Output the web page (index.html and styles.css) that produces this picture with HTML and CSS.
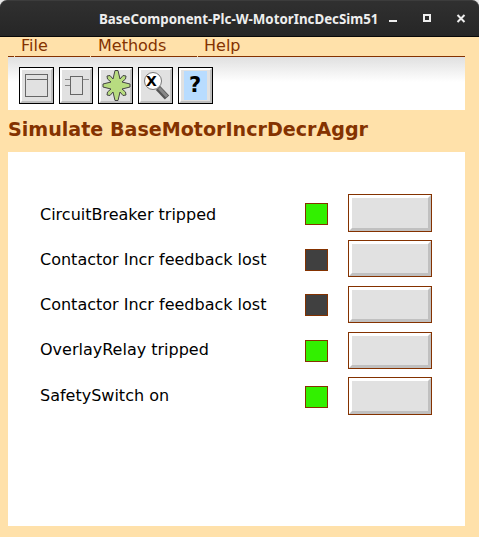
FILE: index.html
```html
<!DOCTYPE html>
<html lang="en">
<head>
<meta charset="utf-8">
<title>BaseComponent-Plc-W-MotorIncDecSim51</title>
<link rel="stylesheet" href="styles.css">
</head>
<body>
<header class="titlebar">
  <div class="title"><svg class="title-text" width="280" height="20"><text x="0" y="14" textLength="279.500" lengthAdjust="spacingAndGlyphs">BaseComponent-Plc-W-MotorIncDecSim51</text></svg></div>
  <svg class="controls" width="80" height="16" shape-rendering="crispEdges">
    <path d="M2 11h8v2H2z" fill="#eee"/>
    <path d="M37 6h6v6h-6z" fill="none" stroke="#eee" stroke-width="2"/>
    <path d="M70.500 6l7 7M77.500 6l-7 7" stroke="#eee" stroke-width="2" shape-rendering="auto"/>
  </svg>
</header>
<nav class="menu">
  <span class="item lead"></span><span class="item file">File</span><span class="item methods">Methods</span><span class="item help">Help</span>
</nav>
<div class="toolbar">
  <button class="tool"><svg width="27" height="29" shape-rendering="crispEdges"><path d="M2.5 3.500h22v22h-22zM4 8.500h20" fill="none" stroke="#666"/></svg></button>
  <button class="tool narrow"><svg width="26" height="29" shape-rendering="crispEdges"><path d="M7.500 5.500h12v18h-12z" fill="none" stroke="#666"/><path d="M2 8.500h5M2 14.500h5M20 8.500h6" stroke="#888"/></svg></button>
  <button class="tool"><svg width="27" height="29"><path d="M13 -.5h3L18 8l3-3.500 3 .5-.5 3L20 11l8 2v3l-8 2 3.500 3 .5 3-3 .5L18 21l-2 8.500h-3L11 21l-3 3.500-3-.5.500-3L9 18l-8-2v-3l8-2L5.500 8 5 5l3-.5L11 8z" fill="#b8dc80" stroke="#444"/></svg></button>
  <button class="tool"><svg width="27" height="29"><path d="M16 17l9 9.500" stroke="#555" stroke-width="6"/><path d="M17 17l8 8.500" stroke="#888" stroke-width="3"/><circle cx="11" cy="10" r="8.500" fill="#fff" stroke="#777"/><text class="glyph" x="4" y="15">X</text></svg></button>
  <button class="tool"><svg width="27" height="29"><path d="M2 0h23v29H2z" fill="#b8dcff"/><text class="question" x="7" y="21">?</text></svg></button>
</div>
<h1>Simulate BaseMotorIncrDecrAggr</h1>
<main>
  <div class="row r1"><span class="label">CircuitBreaker tripped</span><i class="led on"></i><button class="push"></button></div>
  <div class="row r2"><span class="label">Contactor Incr feedback lost</span><i class="led"></i><button class="push"></button></div>
  <div class="row r3"><span class="label">Contactor Incr feedback lost</span><i class="led"></i><button class="push"></button></div>
  <div class="row r4"><span class="label">OverlayRelay tripped</span><i class="led on"></i><button class="push"></button></div>
  <div class="row r5"><span class="label">SafetySwitch on</span><i class="led on"></i><button class="push"></button></div>
</main>
</body>
</html>
```
FILE: styles.css
```css
*, *::before { box-sizing: border-box; }
html { background: #ffe1aa; }
body { margin: 0; width: 479px; height: 537px; overflow: hidden; background: linear-gradient(#e8e8e8 8px, #ffe1aa 8px); font-family: "DejaVu Sans", sans-serif; }
svg { display: block; overflow: visible; }
.titlebar { display: flex; height: 37px; padding: 9px 0 0 99px; background: linear-gradient(#303030, #262626); border-top: 1px solid #3c3c3c; border-bottom: 1px solid #080808; border-radius: 7px 7px 0 0; }
.title { width: 288px; }
.title-text text { font: bold 13.3px "Noto Sans", sans-serif; fill: #eee; }
.controls { margin-top: -1px; }
.menu { display: flex; gap: 1px; height: 20px; margin: 0 14px 0 8px; }
.item { height: 20px; border-bottom: 1px solid #843200; color: #843200; font-size: 16px; line-height: 18px; padding-left: 6px; }
.lead { width: 6px; }
.file { width: 75px; }
.methods { width: 106px; padding-left: 7px; }
.help { flex: 1; }
.toolbar { display: flex; gap: 5px; height: 53px; margin: 0 14px 0 8px; padding: 10px 11px 6px; background: linear-gradient(#e0e0e0, #fff 25px); }
.tool { width: 35px; height: 37px; padding: 0; border: 1px solid #000; background: #e1e1e1; }
.tool svg { width: 33px; height: 35px; padding: 1px; border: 2px solid; border-color: #fff #bebebe #bebebe #fff; }
.narrow { width: 34px; }
.narrow svg { width: 32px; }
.glyph { font: bold 14px "DejaVu Sans", sans-serif; }
.question { font: bold 21px "DejaVu Sans", sans-serif; }
h1 { margin: 0 0 0 8px; height: 42px; font-size: 19.1px; line-height: 39px; color: #843200; white-space: nowrap; }
main { width: 457px; height: 374px; margin-left: 8px; padding: 42px 0 0 32px; background: #fff; }
.row { display: flex; align-items: flex-start; height: 46px; }
.label { width: 265px; font-size: 16px; line-height: 20px; padding-top: 11px; white-space: nowrap; }
.led { width: 23px; height: 22px; margin: 9px 20px 0 0; border: 1px solid #843200; background: #404040; }
.led.on { background: #32f000; }
.push { width: 84px; height: 37px; padding: 0; border: 1px solid #843200; background: #e1e1e1; }
.push::before { content: ""; display: block; width: 82px; height: 35px; border: 3px solid; border-color: #fff #c0c0c0 #c0c0c0 #fff; }
.r1 .push, .r5 .push { height: 38px; }
.r1 .push::before, .r5 .push::before { height: 36px; }
.r2 .label { padding-top: 10px; }
.r3 .label, .r5 .label { padding-top: 9px; }
.r4 .label { padding-top: 8px; }
.r3 .led, .r4 .led { margin-top: 8px; }
.r4 { height: 45px; }
```
